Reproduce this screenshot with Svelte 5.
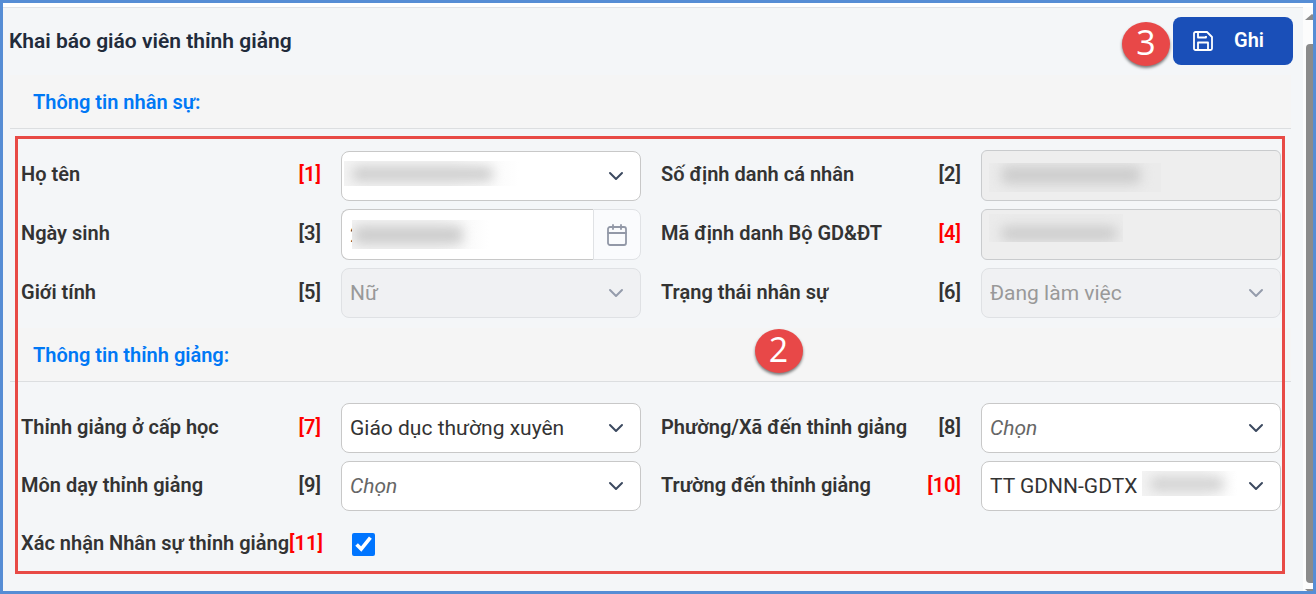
<script>
  const sections = [
    {
      title: 'Thông tin nhân sự:',
      fields: [
        { no: 1, label: 'Họ tên', kind: 'select', value: '', required: true, mask: 'name' },
        { no: 2, label: 'Số định danh cá nhân', kind: 'text', value: '', disabled: true, mask: 'citizen' },
        { no: 3, label: 'Ngày sinh', kind: 'date', value: '2', mask: 'birth' },
        { no: 4, label: 'Mã định danh Bộ GD&ĐT', kind: 'text', value: '', required: true, disabled: true, mask: 'ministry' },
        { no: 5, label: 'Giới tính', kind: 'select', value: 'Nữ', disabled: true },
        { no: 6, label: 'Trạng thái nhân sự', kind: 'select', value: 'Đang làm việc', disabled: true }
      ]
    },
    {
      title: 'Thông tin thỉnh giảng:',
      badge: 2,
      fields: [
        { no: 7, label: 'Thỉnh giảng ở cấp học', kind: 'select', value: 'Giáo dục thường xuyên', required: true },
        { no: 8, label: 'Phường/Xã đến thỉnh giảng', kind: 'select', value: 'Chọn', empty: true },
        { no: 9, label: 'Môn dạy thỉnh giảng', kind: 'select', value: 'Chọn', empty: true },
        { no: 10, label: 'Trường đến thỉnh giảng', kind: 'select', value: 'TT GDNN-GDTX', required: true, mask: 'school' },
        { no: 11, label: 'Xác nhận Nhân sự thỉnh giảng', kind: 'check', required: true }
      ]
    }
  ];
</script>

<div class="window">
  <main>
    <header>
      <h1>Khai báo giáo viên thỉnh giảng</h1>
      <div class="actions">
        <span class="badge step-save">3</span>
        <button class="save" type="button">
          <svg width="20" height="20" viewBox="0 0 20 20" fill="none" stroke="currentColor" stroke-width="1.8" stroke-linejoin="round" aria-hidden="true">
            <path d="M2.5 1H14L19 6V17.5A1.5 1.5 0 0 1 17.5 19H2.5A1.5 1.5 0 0 1 1 17.5V2.5A1.5 1.5 0 0 1 2.500 1Z" />
            <path d="M5 1V6.500H13V5M5 19V11.500H15V19" />
          </svg>
          <span>Ghi</span>
        </button>
      </div>
    </header>

    <form>
      {#each sections as section}
        <section>
          <div class="bar">
            <h2>{section.title}</h2>
            {#if section.badge}<span class="badge step-form">{section.badge}</span>{/if}
          </div>
          <div class="grid">
            {#each section.fields as f}
              <label for="field-{f.no}">
                <span>{f.label}</span>
                <span class:required={f.required}>[{f.no}]</span>
              </label>
              {#if f.kind === 'check'}
                <div class="check"><input id="field-{f.no}" type="checkbox" checked /></div>
              {:else}
                <div class="control">
                  {#if f.kind === 'select'}
                    <select id="field-{f.no}" class:empty={f.empty} disabled={f.disabled}>
                      <option>{f.value}</option>
                    </select>
                    <svg class="chevron" class:dim={f.disabled} width="16" height="10" viewBox="0 0 16 10" fill="none" stroke="currentColor" stroke-width="2" stroke-linecap="round" stroke-linejoin="round" aria-hidden="true">
                      <path d="M2 2L8 8L14 2" />
                    </svg>
                  {:else if f.kind === 'date'}
                    <div class="date">
                      <input id="field-{f.no}" type="text" value={f.value} />
                      <button type="button" aria-label="Ngày sinh">
                        <svg width="22" height="24" viewBox="0 0 22 24" fill="none" stroke="currentColor" stroke-width="1.8" stroke-linecap="round" aria-hidden="true">
                          <rect x="2" y="4" width="18" height="18" rx="2" />
                          <path d="M2 10H20M7 2V6M15 2V6" />
                        </svg>
                      </button>
                    </div>
                  {:else}
                    <input id="field-{f.no}" type="text" value={f.value} disabled={f.disabled} />
                  {/if}
                  {#if f.mask}<span class="mask {f.mask}"><i></i></span>{/if}
                </div>
              {/if}
            {/each}
          </div>
        </section>
      {/each}
    </form>
  </main>

  <div class="scroll" aria-hidden="true">
    <svg width="14" height="6" viewBox="0 0 14 6"><path d="M7 0L14 6H0Z" fill="#8b8b8b" /></svg>
    <div class="thumb"></div>
    <svg width="14" height="6" viewBox="0 0 14 6"><path d="M7 6L14 0H0Z" fill="#8b8b8b" /></svg>
  </div>
</div>

<style>
  .window,
  .window * {
    box-sizing: border-box;
  }

  .window {
    display: flex;
    min-height: 100vh;
    padding-top: 4px;
    border: 3px solid #568dd5;
    background: #fff;
    color: #333;
    font: 400 20px/24px Roboto, sans-serif;
    overflow: hidden;
  }

  main {
    flex: 1;
    min-width: 0;
    border-top: 1px solid #e2e4e7;
    background: #f4f6f8;
  }

  header {
    display: flex;
    align-items: center;
    justify-content: space-between;
    padding: 9px 10px 10px 6px;
  }

  h1,
  h2 {
    margin: 0;
    font-size: 20px;
    font-weight: 600;
    line-height: 24px;
  }

  h1 {
    color: #212b3b;
    font-size: 21px;
  }

  h2 {
    color: #0078f5;
  }

  .actions {
    position: relative;
  }

  .save {
    display: flex;
    align-items: center;
    gap: 21px;
    width: 120px;
    height: 48px;
    padding: 0 20px;
    border: 0;
    border-radius: 8px;
    background: #1a4fb8;
    color: #fff;
    font: 600 20px/24px Roboto, sans-serif;
  }

  .save span {
    padding-bottom: 2px;
  }

  .badge {
    position: absolute;
    width: 48px;
    height: 44px;
    border-radius: 50%;
    background: #e84848;
    box-shadow: 0 2px 3px rgba(0, 0, 0, 0.5);
    color: #fff;
    font: 400 34px/41px "Open Sans", sans-serif;
    text-align: center;
  }

  .step-save {
    right: calc(100% + 3px);
    top: 5px;
  }

  .step-form {
    left: 60%;
    top: 1px;
    transform: translateX(-50%);
  }

  form {
    position: relative;
    padding: 0 12px 17px 7px;
  }

  form::after {
    content: "";
    position: absolute;
    inset: 61px 18px 17px 12px;
    border: 3px solid #e84a46;
    pointer-events: none;
  }

  .bar {
    position: relative;
    padding: 15px 23px 14px;
    border-bottom: 1px solid #dcdee0;
    background: #f5f5f5;
  }

  .grid {
    display: grid;
    grid-template-columns: repeat(4, minmax(0, 1fr));
    grid-auto-rows: minmax(50px, auto);
    align-items: center;
    gap: 8px 20px;
    padding: 21px 10px 10px 11px;
  }

  section:last-child .grid {
    padding-bottom: 5px;
  }

  label {
    display: flex;
    justify-content: space-between;
    padding-bottom: 3px;
    font-weight: 600;
    white-space: nowrap;
  }

  .required {
    color: #f00;
  }

  .control {
    position: relative;
  }

  select,
  input[type="text"] {
    display: block;
    width: 100%;
    height: 50px;
    margin: 0;
    padding: 0 8px;
    border: 1px solid #c8c8c8;
    border-radius: 8px;
    background: #fff;
    color: #333;
    font: 400 21px/24px Roboto, sans-serif;
  }

  select {
    appearance: none;
    padding-right: 48px;
  }

  select:disabled {
    border-color: #dfe1e4;
    background: #f0f1f3;
    color: #999;
    opacity: 1;
  }

  select.empty {
    color: #666;
    font-style: italic;
  }

  input[type="text"] {
    height: 51px;
  }

  input[type="text"]:disabled {
    border-color: #c9cbcd;
    border-radius: 6px;
    background: #eee;
  }

  .chevron {
    position: absolute;
    top: 20px;
    right: 17px;
    color: #3c4a60;
    pointer-events: none;
  }

  .chevron.dim {
    color: #959cab;
  }

  .date {
    display: flex;
  }

  .date input[type="text"] {
    flex: 1;
    min-width: 0;
    border-right: 0;
    border-radius: 8px 0 0 8px;
  }

  .date button {
    display: grid;
    place-items: center;
    width: 48px;
    padding: 0;
    border: 1px solid #e0e2e5;
    border-radius: 0 8px 8px 0;
    background: #fafbfd;
    color: #9298a7;
  }

  .check {
    padding-left: 11px;
  }

  .check input {
    display: block;
    width: 23px;
    height: 23px;
    margin: 0;
    accent-color: #0075ff;
  }

  .mask {
    position: absolute;
    overflow: hidden;
    background: linear-gradient(90deg, #f3f3f3 60%, #fff);
    pointer-events: none;
  }

  .mask i {
    position: absolute;
    inset: 6px 26px 5px 8px;
    border-radius: 6px;
    background: #cdcdcd;
    filter: blur(6px);
  }

  .name {
    left: 3px;
    top: 10px;
    width: 175px;
    height: 25px;
  }

  .birth {
    left: 11px;
    top: 11px;
    width: 137px;
    height: 29px;
  }

  .birth i {
    left: 2px;
  }

  .citizen,
  .ministry {
    background: #ebebeb;
  }

  .citizen {
    left: 8px;
    top: 13px;
    width: 172px;
    height: 29px;
  }

  .citizen i {
    inset: 3px 20px 8px 12px;
  }

  .ministry {
    left: 8px;
    top: 5px;
    width: 134px;
    height: 28px;
  }

  .ministry i {
    inset: 12px 6px 1px 12px;
  }

  .school {
    left: 161px;
    top: 10px;
    width: 96px;
    height: 25px;
  }

  .school i {
    right: 14px;
    background: #d2d2d2;
  }

  .scroll {
    display: flex;
    flex-direction: column;
    align-items: flex-start;
    gap: 24px;
    width: 10px;
    padding: 7px 0 0 2px;
    background: #fcfcfc;
    overflow: hidden;
  }

  .scroll svg {
    flex: none;
  }

  .scroll svg:last-child {
    margin-top: -18px;
    margin-bottom: -4px;
  }

  .thumb {
    flex: 1;
    width: 14px;
    margin-left: 1px;
    border-radius: 4px;
    background: #8b8b8b;
  }
</style>
